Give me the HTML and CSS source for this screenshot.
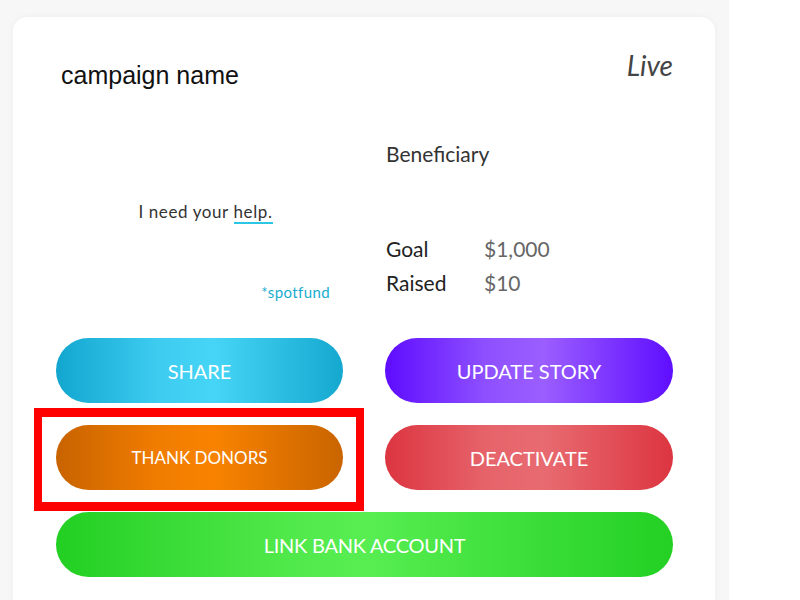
FILE: index.html
```html
<!DOCTYPE html>
<html lang="en">
<head>
    <meta charset="UTF-8">
    <meta name="viewport" content="width=device-width, initial-scale=1.0">
    <title>My Campaign</title>
    <link rel="stylesheet" href="styles.css">
</head>
<body>
    <div class="page">
        <div class="card">
            <div class="card-header">
                <h2 class="campaign-name">campaign name</h2>
                <span class="status">Live</span>
            </div>

            <div class="details">
                <div class="story">
                    <p class="story-text">I need your <span class="underline">help.</span></p>
                    <p class="brand">*spotfund</p>
                </div>

                <div class="info">
                    <div class="beneficiary">Beneficiary</div>
                    <div class="stat">
                        <span class="label">Goal</span>
                        <span class="value">$1,000</span>
                    </div>
                    <div class="stat">
                        <span class="label">Raised</span>
                        <span class="value">$10</span>
                    </div>
                </div>
            </div>

            <div class="actions">
                <button class="btn btn-share">SHARE</button>
                <button class="btn btn-update">UPDATE STORY</button>
                <div class="highlight">
                    <button class="btn btn-thanks">THANK DONORS</button>
                </div>
                <button class="btn btn-deactivate">DEACTIVATE</button>
                <button class="btn btn-bank">LINK BANK ACCOUNT</button>
            </div>
        </div>
    </div>
</body>
</html>
```

FILE: styles.css
```css
body {
    margin: 0;
    background-color: #fff;
    font-family: 'Lato', sans-serif;
}

.page {
    width: 702px;
    padding: 17px 14px 0 13px;
    background-color: #f8f7f7;
}

.card {
    background-color: #fff;
    border-radius: 14px;
    box-shadow: 0 0 6px rgba(0, 0, 0, 0.05);
    padding: 33px 42px 40px 43px;
}

.card-header {
    display: flex;
    justify-content: space-between;
    align-items: flex-start;
}

.campaign-name {
    margin: 10px 0 0 5px;
    font-family: 'Liberation Sans', sans-serif;
    font-weight: normal;
    font-size: 25px;
    line-height: 30px;
    color: #111;
}

.status {
    font-style: italic;
    font-size: 28px;
    line-height: 30px;
    color: #444;
}

.details {
    display: grid;
    grid-template-columns: 287px 1fr;
    column-gap: 43px;
    margin-top: 50px;
}

.story {
    display: flex;
    flex-direction: column;
    align-items: center;
}

.story p {
    margin: 0;
}

.story-text {
    margin-top: 62px !important;
    padding-left: 12px;
    font-size: 17px;
    line-height: 20px;
    color: #333;
    letter-spacing: 0.6px;
}

.underline {
    border-bottom: 2px solid #2ac6e4;
}

.brand {
    align-self: flex-end;
    margin: 61px 13px 0 0 !important;
    font-size: 15px;
    line-height: 18px;
    color: #19acd0;
    letter-spacing: 0.4px;
}

.info {
    font-size: 21px;
    color: #333;
}

.beneficiary {
    height: 37px;
    line-height: 28px;
}

.stat {
    display: flex;
    line-height: 34px;
}

.beneficiary + .stat {
    margin-top: 55px;
}

.label {
    width: 98px;
    color: #222;
}

.value {
    color: #666;
}

.actions {
    display: grid;
    grid-template-columns: 287px 288px;
    column-gap: 42px;
    row-gap: 22px;
    margin-top: 37px;
}

.btn {
    height: 65px;
    width: 100%;
    border: none;
    border-radius: 33px;
    color: #fff;
    font-family: 'Lato', sans-serif;
    font-size: 20px;
    cursor: pointer;
}

.btn-share {
    background: linear-gradient(90deg, #12a6cf 0%, #3dcbf0 35%, #46d5f6 55%, #15a8cf 100%);
}

.btn-update {
    background: linear-gradient(90deg, #5e0cff 0%, #8e50ff 35%, #9b5eff 55%, #5f0eff 100%);
}

.btn-thanks {
    background: linear-gradient(90deg, #c86300 0%, #f07c00 35%, #f98300 55%, #c96400 100%);
    font-size: 17px;
}

.btn-deactivate {
    background: linear-gradient(90deg, #dc3540 0%, #e6636a 35%, #e86b71 55%, #dc3540 100%);
}

.btn-bank {
    grid-column: 1 / -1;
    background: linear-gradient(90deg, #22cf22 0%, #4ee748 35%, #58ee52 50%, #23d023 100%);
    letter-spacing: -0.25px;
}

.highlight {
    position: relative;
}

.highlight::after {
    content: '';
    position: absolute;
    top: -17px;
    left: -22px;
    right: -21px;
    bottom: -21px;
    border: 8px solid #ff0000;
    border-top-width: 9px;
    border-bottom-width: 9px;
    pointer-events: none;
}
```
